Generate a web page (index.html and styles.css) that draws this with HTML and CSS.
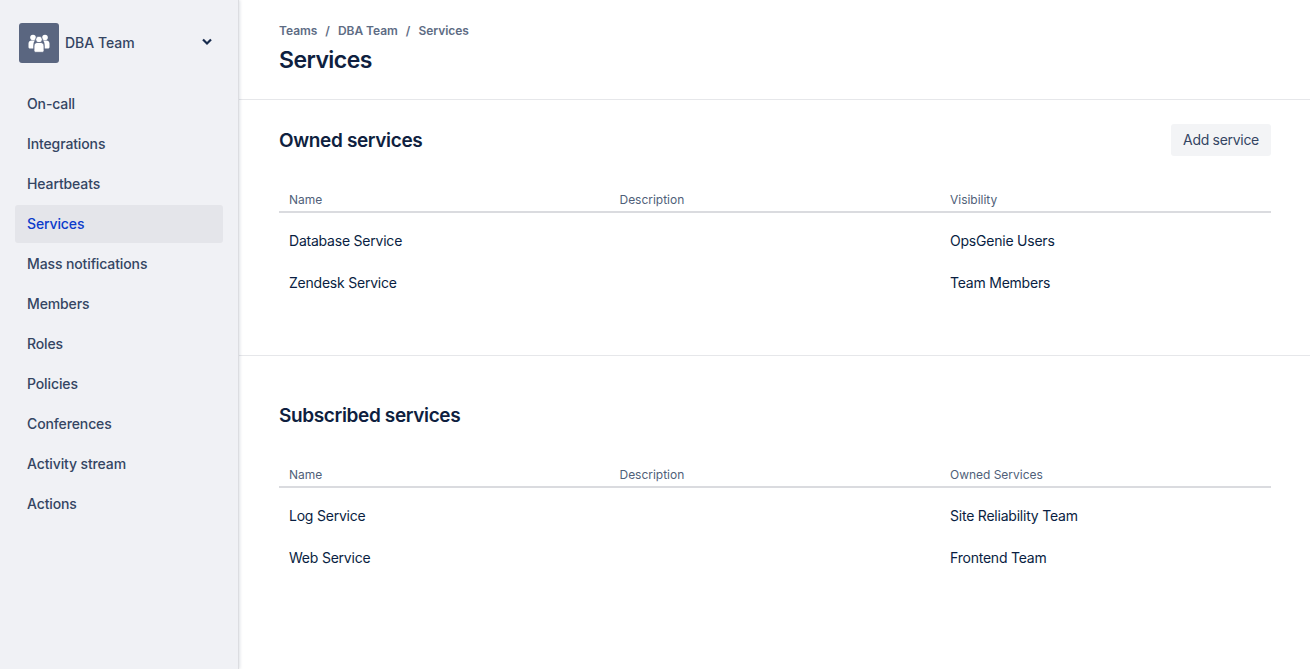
FILE: index.html
```html
<!DOCTYPE html>
<html lang="en">
<head>
<meta charset="utf-8">
<title>Services</title>
<link rel="stylesheet" href="styles.css">
</head>
<body>
<div class="app">
  <aside class="sidebar">
    <div class="team">
      <div class="team-icon">
        <svg width="24" height="24" viewBox="0 0 24 24" fill="#fff">
          <circle cx="6" cy="6.500" r="2.800"/>
          <circle cx="18" cy="6.500" r="2.800"/>
          <path d="M1.500 16v-3.500c0-2 1.500-3 3-3h3.500c-.8 1-1.500 2-1.500 3.500v4.500h-3.200C2.300 17.500 1.500 17 1.500 16zM22.500 16v-3.500c0-2-1.500-3-3-3H16c.8 1 1.500 2 1.500 3.500v4.500h3.200c1 0 1.800-.5 1.800-1.500z"/>
          <circle cx="12" cy="8.500" r="3.300" stroke="#5a6680" stroke-width=".8"/>
          <path d="M7 15c0-2.200 1.500-3.500 3-3.500h4c1.500 0 3 1.300 3 3.500v4.500c0 1-.7 1.800-1.800 1.800H8.800C7.700 21.300 7 20.500 7 19.500z" stroke="#5a6680" stroke-width=".8"/>
        </svg>
      </div>
      <span class="team-name">DBA Team</span>
      <svg class="chevron" width="10" height="8" viewBox="0 0 10 8" fill="none" stroke="#172b4d" stroke-width="2.200"><path d="M1 1.500l4 4 4-4"/></svg>
    </div>
    <nav class="nav">
      <a class="nav-item">On-call</a>
      <a class="nav-item">Integrations</a>
      <a class="nav-item">Heartbeats</a>
      <a class="nav-item active">Services</a>
      <a class="nav-item">Mass notifications</a>
      <a class="nav-item">Members</a>
      <a class="nav-item">Roles</a>
      <a class="nav-item">Policies</a>
      <a class="nav-item">Conferences</a>
      <a class="nav-item">Activity stream</a>
      <a class="nav-item">Actions</a>
    </nav>
  </aside>
  <main class="main">
    <header class="page-head">
      <div class="crumbs"><span>Teams</span><span>/</span><span>DBA Team</span><span>/</span><span>Services</span></div>
      <h1>Services</h1>
    </header>
    <section class="owned">
      <div class="section-head">
        <h2>Owned services</h2>
        <button class="btn">Add service</button>
      </div>
      <div class="table">
        <div class="row th"><span>Name</span><span>Description</span><span>Visibility</span></div>
        <div class="row td first"><span>Database Service</span><span></span><span>OpsGenie Users</span></div>
        <div class="row td"><span>Zendesk Service</span><span></span><span>Team Members</span></div>
      </div>
    </section>
    <section class="subscribed">
      <div class="section-head">
        <h2>Subscribed services</h2>
      </div>
      <div class="table">
        <div class="row th"><span>Name</span><span>Description</span><span>Owned Services</span></div>
        <div class="row td first"><span>Log Service</span><span></span><span>Site Reliability Team</span></div>
        <div class="row td"><span>Web Service</span><span></span><span>Frontend Team</span></div>
      </div>
    </section>
  </main>
</div>
</body>
</html>
```
FILE: styles.css
```css
* { box-sizing: border-box; }
html, body { margin: 0; height: 100%; overflow: hidden; }
body { font-family: Inter, "Liberation Sans", sans-serif; color: #172b4d; background: #fff; font-size: 14px; }
.app { display: flex; height: 669px; }
.sidebar { width: 239px; flex: none; background: #f0f1f5; border-right: 1px solid #dcdde1; box-shadow: 1px 0 3px rgba(9,30,66,.13); padding: 23px 0 0 15px; position: relative; }
.team { display: flex; align-items: center; height: 40px; width: 208px; padding-left: 4px; }
.team-icon { width: 40px; height: 40px; border-radius: 3px; background: #5a6680; display: flex; align-items: center; justify-content: center; }
.team-name { margin-left: 6px; padding-bottom: 1px; font-size: 14px; font-weight: 500; color: #344563; flex: 1; }
.chevron { margin-right: 11px; margin-top: -3px; }
.nav { display: flex; flex-direction: column; margin-top: 22px; width: 208px; }
.nav-item { height: 38px; margin-bottom: 2px; padding: 0 0 2px 12px; display: flex; align-items: center; font-size: 14px; font-weight: 500; letter-spacing: -.12px; color: #344563; border-radius: 3px; }
.nav-item.active { background: #e4e5ea; color: #0c3ccb; }
.main { flex: 1; min-width: 0; }
.page-head { height: 100px; padding: 24px 40px 0; border-bottom: 1px solid #e6e7ea; }
.crumbs { display: flex; gap: 8px; font-size: 12px; font-weight: 600; line-height: 14px; letter-spacing: -.03px; color: #5e6c84; }
h1 { margin: 8px 0 0; font-size: 23px; font-weight: 600; line-height: 28px; letter-spacing: -.55px; color: #0f1f40; }
h2 { margin: 0; padding-top: 2px; font-size: 19px; font-weight: 600; line-height: 24px; letter-spacing: -.36px; color: #0f1f40; }
.owned { height: 256px; padding: 24px 39px 0 40px; border-bottom: 1px solid #e6e7ea; }
.subscribed { padding: 43px 39px 0 40px; }
.section-head { display: flex; align-items: center; justify-content: space-between; height: 32px; }
.btn { height: 32px; width: 100px; border: 0; border-radius: 3px; background: #f3f4f6; font: inherit; font-size: 14px; letter-spacing: -.3px; color: #344563; padding: 0 0 2px; }
.table { margin-top: 24px; }
.row { display: grid; grid-template-columns: 330.500px 330.500px 1fr; padding-left: 10px; }
.th { height: 33px; align-items: center; padding-top: 7px; font-size: 12px; letter-spacing: -.02px; color: #505f79; border-bottom: 2px solid #dadbdf; }
.td { height: 42px; align-items: center; font-size: 14px; letter-spacing: -.22px; color: #091e42; }
.td.first { margin-top: 6px; }
```
